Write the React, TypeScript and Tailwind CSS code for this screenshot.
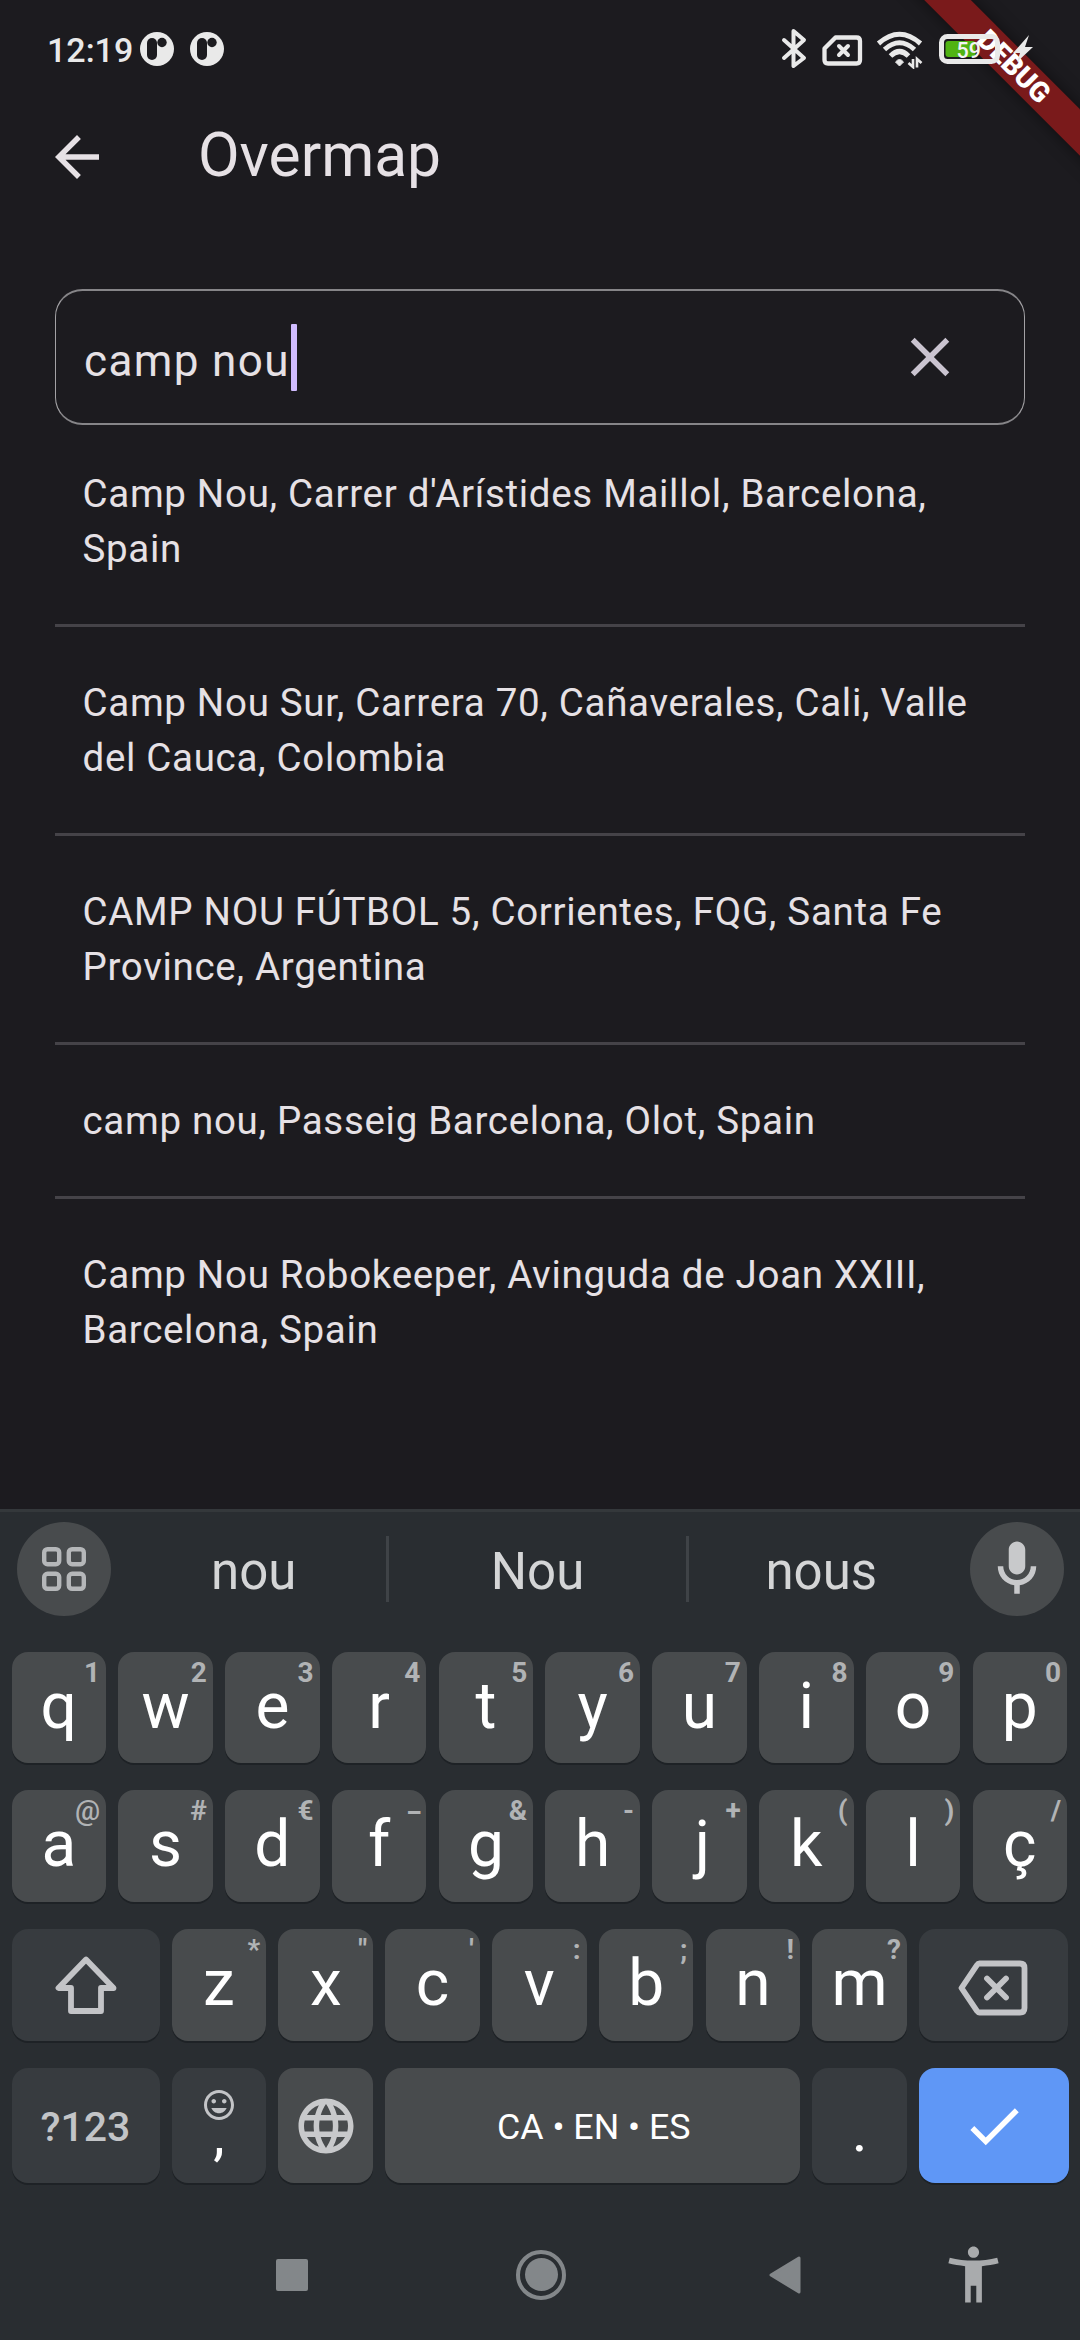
import type { ReactNode } from "react";

const results = [
  ["Camp Nou, Carrer d'Arístides Maillol, Barcelona,", "Spain"],
  ["Camp Nou Sur, Carrera 70, Cañaverales, Cali, Valle", "del Cauca, Colombia"],
  ["CAMP NOU FÚTBOL 5, Corrientes, FQG, Santa Fe", "Province, Argentina"],
  ["camp nou, Passeig Barcelona, Olot, Spain"],
  ["Camp Nou Robokeeper, Avinguda de Joan XXIII,", "Barcelona, Spain"],
];

const row1 = [["q", "1"], ["w", "2"], ["e", "3"], ["r", "4"], ["t", "5"], ["y", "6"], ["u", "7"], ["i", "8"], ["o", "9"], ["p", "0"]];
const row2 = [["a", "@"], ["s", "#"], ["d", "€"], ["f", "_"], ["g", "&"], ["h", "-"], ["j", "+"], ["k", "("], ["l", ")"], ["ç", "/"]];
const row3 = [["z", "*"], ["x", '"'], ["c", "'"], ["v", ":"], ["b", ";"], ["n", "!"], ["m", "?"]];

function Glyph({ d, className }: { d: string; className: string }) {
  return (
    <svg viewBox="0 0 24 24" fill="currentColor" className={className}>
      <path d={d} />
    </svg>
  );
}

function LetterKey({ letter, hint }: { letter: string; hint: string }) {
  return (
    <div
      className={`relative h-full w-[94.6px] shrink-0 rounded-[16px] bg-[#484b4d] text-center text-[64px] leading-[110px] text-white shadow-[0_2px_0_#1e2226] ${
        letter === "j" ? "pl-[6px]" : ""
      }`}
    >
      {letter}
      <span
        className={`absolute top-0 right-[6px] text-[28px] leading-[41px] text-[#b1b3b5] ${
          hint === "@" ? "font-medium" : "font-bold"
        } ${hint === "_" ? "-mt-[9px]" : ""}`}
      >
        {hint}
      </span>
    </div>
  );
}

function Key({ className, children }: { className: string; children?: ReactNode }) {
  return (
    <div className={`flex h-full shrink-0 items-center justify-center rounded-[16px] shadow-[0_2px_0_#1e2226] ${className}`}>
      {children}
    </div>
  );
}

function NotificationDot() {
  return (
    <svg viewBox="0 0 34 34" className="size-[34px]">
      <circle cx="17" cy="17" r="17" fill="#e9e9e9" />
      <rect x="7" y="6" width="10" height="22" rx="5" fill="#1c1b1f" />
      <circle cx="22" cy="10.5" r="4.7" fill="#1c1b1f" />
    </svg>
  );
}

function DebugRibbon() {
  return (
    <div className="absolute top-0 right-0 size-[220px] overflow-hidden">
      <div className="absolute top-[49.5px] -left-[46px] flex h-[33px] w-[400px] rotate-45 items-center justify-center bg-[#7a1a1b] text-[28px] leading-[33px] font-black text-white shadow-[0_0_16px_rgba(0,0,0,0.5)]">
        DEBUG
      </div>
    </div>
  );
}

function StatusBar() {
  return (
    <div className="relative flex h-[79px] items-start">
      <div className="ml-[47px] w-[93px] pt-[30px] text-[34px] leading-[40px] font-medium text-[#e9e9e9]">12:19</div>
      <div className="flex gap-[16px] pt-[32px]">
        <NotificationDot />
        <NotificationDot />
      </div>
      <svg viewBox="0 0 260 40" fill="none" className="mt-[29px] ml-[556px] h-[40px] w-[260px] shrink-0" stroke="#e9e9e9">
        <path d="M4 11L24 29L13.5 37V2L24 11L4 29" strokeWidth="4" strokeLinecap="round" strokeLinejoin="round" />
        <path d="M55.5 8.5H76.500Q80 8.500 80 12V31Q80 34.500 76.500 34.500H48Q44.500 34.500 44.500 31V19.500Z" strokeWidth="4.3" strokeLinejoin="round" />
        <path d="M59 17L68 26M68 17L59 26" strokeWidth="4" strokeLinecap="round" />
        <path d="M98.500 14.500Q119.500 -4 140.500 14.500" strokeWidth="5" strokeLinecap="butt" />
        <path d="M104.500 20.500Q119.500 7 134.500 20.500" strokeWidth="5" />
        <path d="M110.500 27Q119.500 18 128.500 27" strokeWidth="5" />
        <path d="M119.500 37L115.500 33Q119.500 28 123.500 33Z" fill="#e9e9e9" strokeWidth="1" />
        <path d="M133 30V38L128.500 34M137 38.500V30L141.500 34" strokeWidth="2.6" />
        <rect x="161.500" y="7.500" width="56" height="25" rx="6" strokeWidth="5" />
        <rect x="165.500" y="12" width="30" height="16" rx="3" fill="#50b313" stroke="none" />
        <path d="M249 6L233 24H240L237 33L253 18H245Z" fill="#e9e9e9" stroke="none" />
        <text x="176.500" y="28.500" fill="#f4f4f4" stroke="none" className="text-[21.5px] font-medium">59</text>
      </svg>
    </div>
  );
}

export default function App() {
  return (
    <div className="relative flex h-[2340px] w-[1080px] flex-col overflow-hidden bg-[#1c1b1f] font-['Roboto',sans-serif] text-[#e6e1e5]">
      <DebugRibbon />
      <StatusBar />

      <header className="flex h-[154px] items-center pl-[44px]">
        <Glyph d="M20 11H7.830l5.590-5.590L12 4l-8 8 8 8 1.410-1.410L7.830 13H20v-2z" className="size-[66px] translate-y-px" />
        <h1 className="ml-[88px] text-[60.5px] leading-[154px]">Overmap</h1>
      </header>

      <main className="px-[55px] pt-[56px]">
        <div className="flex h-[136px] items-center rounded-[27.500px] border-x border-y-2 border-x-[#a3a2a5] border-y-[#868588] pl-[28px]">
          <span className="mt-[7px] text-[44px] leading-[66px] tracking-[1.375px]">camp nou</span>
          <span className="ml-px h-[67px] w-[6px] rounded-[1px] bg-[#d0bcff]" />
          <Glyph
            d="M19 6.410L17.590 5 12 10.590 6.410 5 5 6.410 10.590 12 5 17.590 6.410 19 12 13.410 17.590 19 19 17.590 13.410 12z"
            className="mr-[61px] ml-auto size-[66px] text-[#cac4d0]"
          />
        </div>
        <ul className="pt-[41px]">
          {results.map((lines, i) => (
            <li key={lines[0]}>
              {i > 0 && <div className="mb-[48px] h-[3px] bg-[#454348]" />}
              <div className="mb-[48px] pl-[27.500px] text-[38.500px] leading-[55px] tracking-[0.6875px] whitespace-nowrap">
                {lines.map((line) => (
                  <div key={line}>{line}</div>
                ))}
              </div>
            </li>
          ))}
        </ul>
      </main>

      <section className="mt-auto h-[831px] shrink-0 border-t-[3px] border-[#34383b] bg-[#292d31]">
        <div className="flex h-[114px] items-center pr-[16.500px] pl-[16.500px]">
          <div className="flex size-[94px] shrink-0 items-center justify-center rounded-full bg-[#484b4d]">
            <svg viewBox="0 0 44 44" fill="none" stroke="#b5b7b9" strokeWidth="4.400" className="size-[44px]">
              <rect x="2.200" y="2.200" width="15" height="15" rx="3.300" />
              <rect x="26.800" y="2.200" width="15" height="15" rx="3.300" />
              <rect x="2.200" y="26.800" width="15" height="15" rx="3.300" />
              <rect x="26.800" y="26.800" width="15" height="15" rx="3.300" />
            </svg>
          </div>
          <div className="w-[275.500px] pt-[6px] pl-[11px] text-center text-[51px] leading-[60px] text-[#d4d5d6]">nou</div>
          <div className="h-[66px] w-[3px] bg-[#3f4347]" />
          <div className="w-[297px] pt-[6px] text-center text-[51px] leading-[60px] text-[#d4d5d6]">Nou</div>
          <div className="h-[66px] w-[3px] bg-[#3f4347]" />
          <div className="flex-1 pt-[6px] pr-[16px] text-center text-[51px] leading-[60px] text-[#d4d5d6]">nous</div>
          <div className="flex size-[94px] shrink-0 items-center justify-center rounded-full bg-[#484b4d] text-[#c8c9cb]">
            <Glyph
              className="size-[66px]"
              d="M12 14c1.660 0 3-1.340 3-3V5c0-1.660-1.340-3-3-3S9 3.340 9 5v6c0 1.660 1.340 3 3 3zM17 11c0 2.760-2.240 5-5 5s-5-2.240-5-5H5c0 3.530 2.610 6.430 6 6.920V21h2v-3.080c3.390-.49 6-3.390 6-6.920h-2z"
            />
          </div>
        </div>

        <div className="mt-[26px] flex flex-col px-[11.500px]">
          <div className="flex h-[111px] gap-[12.200px]">
            {row1.map(([l, h]) => <LetterKey key={l} letter={l} hint={h} />)}
          </div>
          <div className="mt-[27px] flex h-[112px] gap-[12.200px]">
            {row2.map(([l, h]) => <LetterKey key={l} letter={l} hint={h} />)}
          </div>
          <div className="mt-[27px] flex h-[112px] gap-[12.200px]">
            <Key className="w-[148px] bg-[#373b3f]">
              <svg viewBox="0 0 62 60" fill="none" stroke="#c3c4c7" strokeWidth="5.800" strokeLinejoin="round" className="h-[60px] w-[62px]">
                <path d="M31 4.500L3.500 33H16V56H46V33H58.500Z" />
              </svg>
            </Key>
            {row3.map(([l, h]) => <LetterKey key={l} letter={l} hint={h} />)}
            <Key className="w-[148.500px] bg-[#373b3f]">
              <svg viewBox="0 0 70 56" fill="none" stroke="#c3c4c7" strokeWidth="5.800" strokeLinejoin="round" className="mt-[5px] h-[56px] w-[70px]">
                <path d="M21.500 3.500H62Q66.500 3.500 66.500 8V48Q66.500 52.500 62 52.500H21.500Q20 52.500 19 51L3.500 28L19 5Q20 3.500 21.500 3.500Z" />
                <path d="M29 18.500L48 37.500M48 18.500L29 37.500" strokeLinecap="round" />
              </svg>
            </Key>
          </div>
          <div className="mt-[27px] flex h-[115px] gap-[12.200px]">
            <Key className="w-[148px] bg-[#373b3f] pt-[3px] text-[41px] leading-[48px] font-medium text-[#c2c4c7]">?123</Key>
            <Key className="w-[94.600px] flex-col bg-[#373b3f] pb-[26px] text-[#c3c4c7]">
              <Glyph
                className="mt-[10px] size-[36px] shrink-0"
                d="M11.990 2C6.470 2 2 6.480 2 12s4.470 10 9.990 10C17.520 22 22 17.520 22 12S17.520 2 11.990 2zM12 20c-4.420 0-8-3.580-8-8s3.580-8 8-8 8 3.580 8 8-3.580 8-8 8zm3.500-9c.83 0 1.500-.67 1.500-1.500S16.330 8 15.500 8 14 8.670 14 9.500s.67 1.500 1.500 1.500zm-7 0c.83 0 1.500-.67 1.500-1.500S9.330 8 8.500 8 7 8.670 7 9.500 7.670 11 8.500 11zm3.500 6.500c2.330 0 4.310-1.460 5.110-3.500H6.890c.8 2.040 2.780 3.500 5.110 3.500z"
              />
              <span className="-mt-[4px] text-[58px] leading-[30px] text-white">,</span>
            </Key>
            <Key className="w-[94.600px] bg-[#484b4d] text-[#c8c9cb]">
              <Glyph
                className="size-[66px]"
                d="M11.990 2C6.470 2 2 6.480 2 12s4.470 10 9.990 10C17.520 22 22 17.520 22 12S17.520 2 11.990 2zm6.930 6h-2.950c-.32-1.250-.78-2.450-1.380-3.560 1.840.63 3.370 1.910 4.330 3.560zM12 4.040c.83 1.200 1.480 2.530 1.910 3.960h-3.820c.43-1.430 1.080-2.760 1.910-3.960zM4.260 14C4.100 13.360 4 12.690 4 12s.1-1.360.26-2h3.380c-.08.66-.14 1.320-.14 2 0 .68.060 1.340.14 2H4.260zm.82 2h2.950c.32 1.250.78 2.450 1.380 3.560-1.840-.63-3.370-1.900-4.330-3.560zm2.950-8H5.080c.96-1.660 2.490-2.930 4.330-3.560C8.810 5.550 8.350 6.750 8.030 8zM12 19.960c-.83-1.200-1.480-2.530-1.910-3.960h3.820c-.43 1.430-1.080 2.760-1.910 3.960zM14.340 14H9.660c-.09-.66-.16-1.320-.16-2 0-.68.070-1.350.16-2h4.680c.09.65.16 1.320.16 2 0 .68-.07 1.340-.16 2zm.25 5.560c.6-1.110 1.060-2.310 1.380-3.560h2.950c-.96 1.650-2.490 2.930-4.330 3.560zM16.360 14c.08-.66.14-1.320.14-2 0-.68-.06-1.340-.14-2h3.380c.16.64.26 1.310.26 2s-.1 1.360-.26 2h-3.380z"
              />
            </Key>
            <Key className="w-[415px] bg-[#484b4d] pt-[3px] pl-[2px] text-[35.750px] leading-[44px] text-white">
              <span>CA • EN • ES</span>
            </Key>
            <Key className="w-[94.600px] bg-[#373b3f] pt-[10px] text-[60px] leading-[70px] text-white">.</Key>
            <Key className="w-[149.500px] bg-[#5f97f6] text-white">
              <Glyph className="size-[66px]" d="M9 16.170L4.830 12l-1.420 1.410L9 19 21 7l-1.410-1.410z" />
            </Key>
          </div>
        </div>

        <nav className="mt-[58px] flex h-[67px] items-center pl-[276px] text-[#83878a]">
          <div className="h-[32px] w-[32px] rounded-[2px] bg-[#83878a]" />
          <div className="ml-[208px] flex size-[50px] items-center justify-center rounded-full border-4 border-[#83878a]">
            <div className="size-[33px] shrink-0 rounded-full bg-[#83878a]" />
          </div>
          <svg viewBox="0 0 32 38" className="ml-[203px] h-[38px] w-[32px]" fill="#83878a" stroke="#83878a" strokeWidth="3" strokeLinejoin="round">
            <path d="M2 19L30 2V36Z" />
          </svg>
          <Glyph
            className="ml-[139px] size-[67px] text-[#a9abad]"
            d="M20.500 6c-2.610.7-5.670 1-8.500 1s-5.890-.3-8.500-1L3 8c1.860.5 4 .83 6 1v13h2v-6h2v6h2V9c2-.17 4.140-.5 6-1l-.5-2zM12 6c1.100 0 2-.9 2-2s-.9-2-2-2-2 .9-2 2 .9 2 2 2z"
          />
        </nav>
      </section>
    </div>
  );
}
